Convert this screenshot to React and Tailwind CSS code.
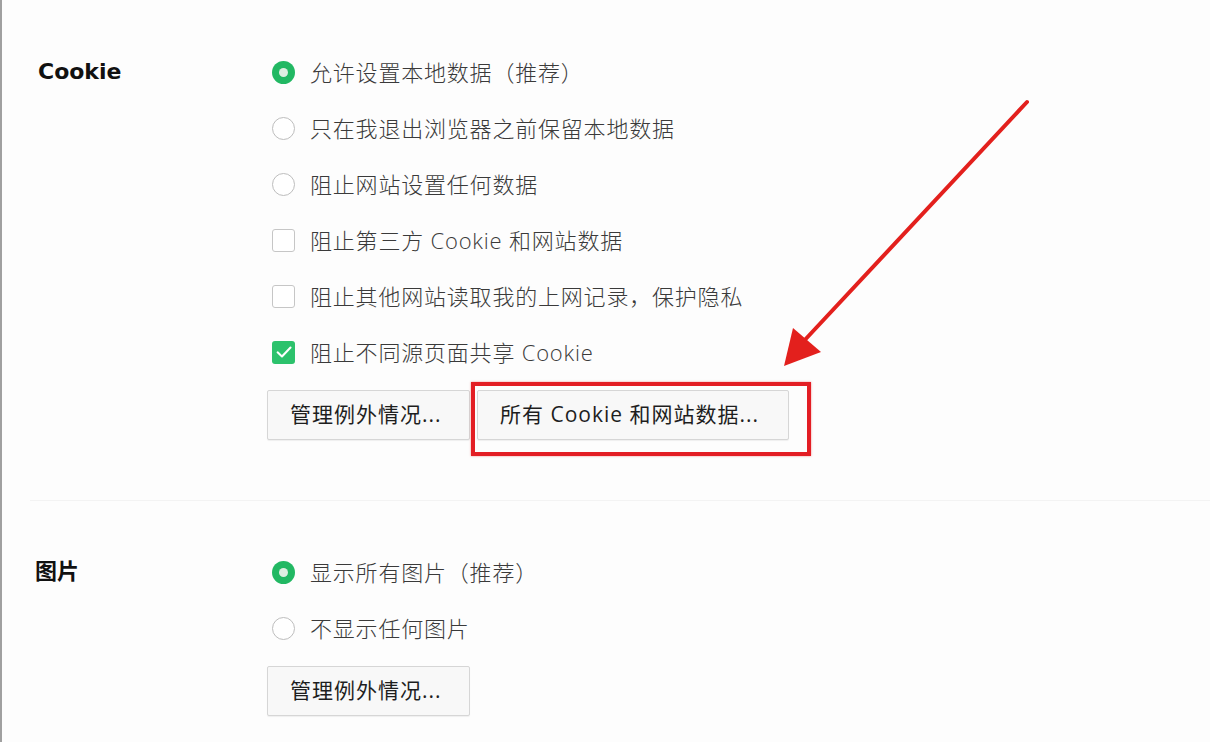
import React from "react";

const txt = { fontFamily: '"Open Sans", "Noto Sans CJK SC", sans-serif' };
const bold = { fontFamily: '"DejaVu Sans", "Noto Sans CJK SC", sans-serif' };

function Radio({ checked }) {
  return checked ? (
    <span className="ml-[5px] w-[23px] h-[23px] rounded-full bg-[#22b863] flex items-center justify-center shrink-0">
      <span className="w-[9px] h-[9px] rounded-full bg-[#dfeee2]" />
    </span>
  ) : (
    <span className="ml-[5px] w-[23px] h-[23px] rounded-full border-[1.5px] border-[#bdbdbd] bg-white shrink-0" />
  );
}

function Check({ checked }) {
  return checked ? (
    <span className="ml-[5px] w-[23px] h-[23px] rounded-[3px] bg-[#2cc26c] flex items-center justify-center shrink-0">
      <svg width="18" height="18" viewBox="0 0 16 16" fill="none">
        <path d="M2.3 8.3 L6.2 12 L13.8 4" stroke="white" strokeWidth="1.8" strokeLinecap="round" strokeLinejoin="round" />
      </svg>
    </span>
  ) : (
    <span className="ml-[5px] w-[23px] h-[23px] rounded-[3px] border-[1.5px] border-[#c6c6c6] bg-white shrink-0" />
  );
}

function Row({ children, control }) {
  return (
    <div className="h-[28px] flex items-center gap-[15px]">
      {control}
      <span className="text-[22px] font-light tracking-[0.8px] text-[#3a3a3a] leading-none whitespace-nowrap" style={txt}>
        {children}
      </span>
    </div>
  );
}

function Btn({ children, w }) {
  return (
    <div
      className={`h-[50px] ${w} flex items-center justify-start pl-[22px] border border-[#d6d6d6] rounded-[2px] bg-[#f8f8f8] shadow-[0_1px_1px_rgba(0,0,0,0.06)] text-[21px] tracking-[1px] text-[#1e1e1e] whitespace-nowrap`}
      style={txt}
    >
      {children}
    </div>
  );
}

export default function App() {
  return (
    <div className="relative w-[1210px] h-[742px] overflow-hidden bg-[#fdfdfd] border-l-2 border-[#a0a0a0]">
      {/* Cookie section */}
      <div className="flex pt-[58px] pb-[60px] ml-[28px] border-b border-[#f3f3f3]">
        <div className="w-[237px] pl-[8px] h-[28px] flex items-center">
          <span className="text-[22px] font-bold text-[#111] leading-none" style={bold}>Cookie</span>
        </div>
        <div className="flex flex-col">
          <div className="flex flex-col gap-[28px]">
            <Row control={<Radio checked />}>允许设置本地数据（推荐）</Row>
            <Row control={<Radio />}>只在我退出浏览器之前保留本地数据</Row>
            <Row control={<Radio />}>阻止网站设置任何数据</Row>
            <Row control={<Check />}>阻止第三方 Cookie 和网站数据</Row>
            <Row control={<Check />}>阻止其他网站读取我的上网记录，保护隐私</Row>
            <Row control={<Check checked />}>阻止不同源页面共享 Cookie</Row>
          </div>
          <div className="flex gap-[7px] mt-[24px]">
            <Btn w="w-[203px]">管理例外情况...</Btn>
            <div className="relative">
              <Btn w="w-[312px]">所有 Cookie 和网站数据...</Btn>
              <div className="absolute left-[-6px] top-[-8px] w-[340px] h-[74px] border-[4px] border-[#e31e24] shadow-[0_0_2px_rgba(228,31,31,0.5)] pointer-events-none" />
            </div>
          </div>
        </div>
      </div>

      {/* 图片 section */}
      <div className="flex pt-[57px] ml-[28px]">
        <div className="w-[237px] pl-[5px] h-[28px] flex items-center">
          <span className="text-[22px] font-bold text-[#111] leading-none" style={bold}>图片</span>
        </div>
        <div className="flex flex-col">
          <div className="flex flex-col gap-[28px]">
            <Row control={<Radio checked />}>显示所有图片（推荐）</Row>
            <Row control={<Radio />}>不显示任何图片</Row>
          </div>
          <div className="flex mt-[24px]">
            <Btn w="w-[203px]">管理例外情况...</Btn>
          </div>
        </div>
      </div>

      {/* annotation arrow */}
      <svg className="absolute left-0 top-0 pointer-events-none" width="1210" height="742" viewBox="0 0 1210 742">
        <line x1="1025" y1="102" x2="800" y2="343" stroke="#e3201d" strokeWidth="4" strokeLinecap="round" />
        <polygon points="782,366 791,328 819,352" fill="#e3201d" />
      </svg>
    </div>
  );
}
